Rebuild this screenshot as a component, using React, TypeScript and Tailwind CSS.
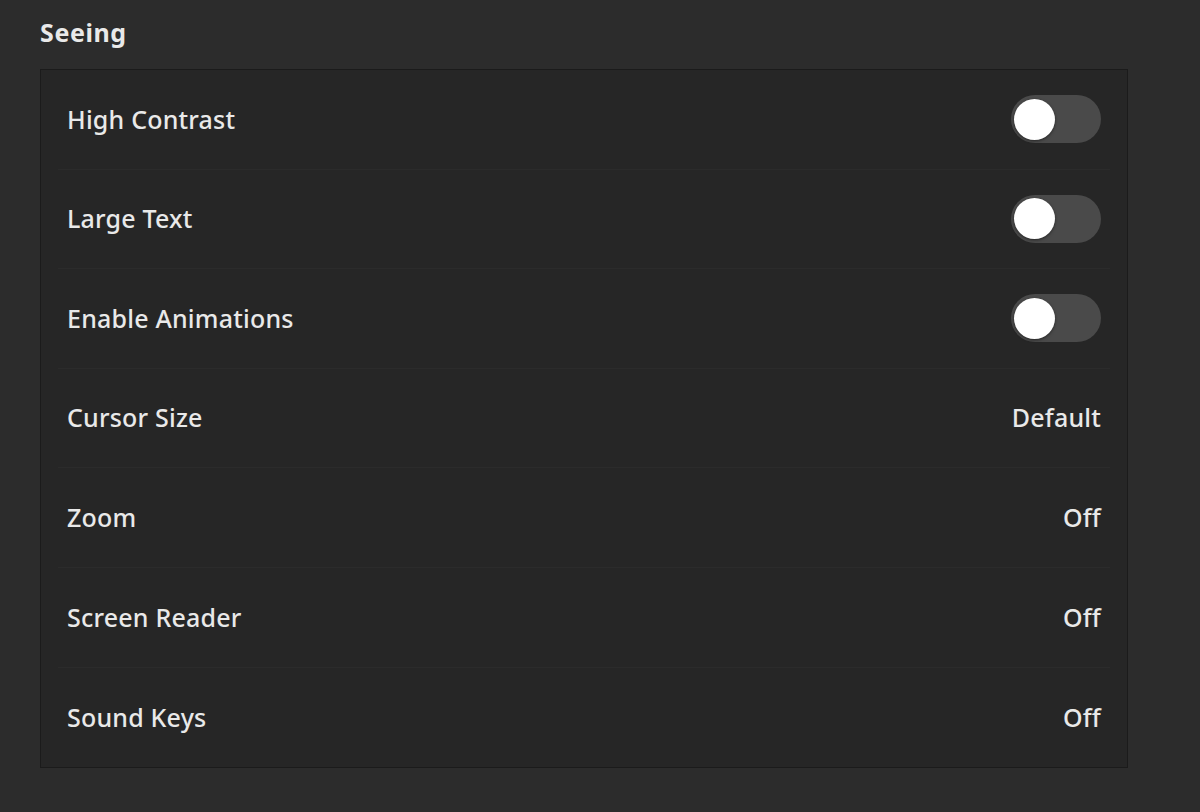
import React from "react";

type Row = { label: string; toggle?: boolean; value?: string };

const rows: Row[] = [
  { label: "High Contrast", toggle: true },
  { label: "Large Text", toggle: true },
  { label: "Enable Animations", toggle: true },
  { label: "Cursor Size", value: "Default" },
  { label: "Zoom", value: "Off" },
  { label: "Screen Reader", value: "Off" },
  { label: "Sound Keys", value: "Off" },
];

function Switch() {
  return (
    <div className="flex h-[48px] w-[90px] items-center rounded-full bg-[#4a4a4a] px-[3px]">
      <div className="h-[41px] w-[41px] rounded-full bg-white shadow-[0_1px_3px_rgba(0,0,0,0.5)]" />
    </div>
  );
}

export default function App() {
  return (
    <div
      className="min-h-[812px] w-full bg-[#2c2c2c] px-[40px] pt-[14px] text-[#e9e9e9]"
      style={{ fontFamily: '"Noto Sans", "Open Sans", sans-serif' }}
    >
      <h2 className="h-[36px] text-[25px] font-bold leading-[36px] tracking-[0.6px]">Seeing</h2>
      <div className="mt-[19px] w-[1088px] border border-[#1b1b1b] bg-[#262626]">
        {rows.map((r, i) => (
          <div key={r.label} className="px-[17px]">
            <div
              className={
                "flex h-[99.6px] items-center justify-between px-[9px] text-[25px] font-medium tracking-[0.2px] " +
                (i < rows.length - 1 ? "border-b border-[#2b2b2b]" : "")
              }
            >
              <span>{r.label}</span>
              {r.toggle ? <Switch /> : <span>{r.value}</span>}
            </div>
          </div>
        ))}
      </div>
    </div>
  );
}
